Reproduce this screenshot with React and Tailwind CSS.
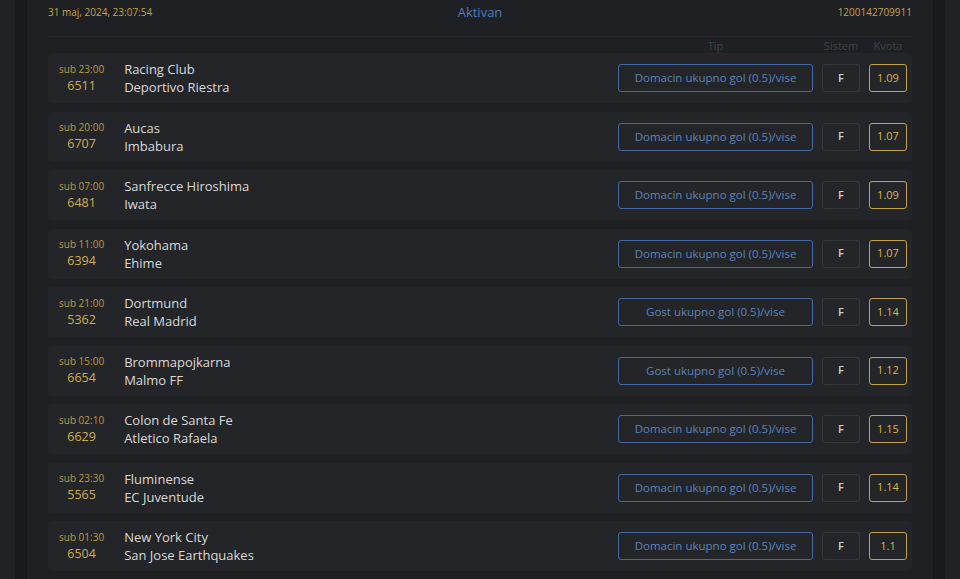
import React from "react";

const matches = [
  { time: "sub 23:00", code: "6511", home: "Racing Club", away: "Deportivo Riestra", tip: "Domacin ukupno gol (0.5)/vise", odd: "1.09" },
  { time: "sub 20:00", code: "6707", home: "Aucas", away: "Imbabura", tip: "Domacin ukupno gol (0.5)/vise", odd: "1.07" },
  { time: "sub 07:00", code: "6481", home: "Sanfrecce Hiroshima", away: "Iwata", tip: "Domacin ukupno gol (0.5)/vise", odd: "1.09" },
  { time: "sub 11:00", code: "6394", home: "Yokohama", away: "Ehime", tip: "Domacin ukupno gol (0.5)/vise", odd: "1.07" },
  { time: "sub 21:00", code: "5362", home: "Dortmund", away: "Real Madrid", tip: "Gost ukupno gol (0.5)/vise", odd: "1.14" },
  { time: "sub 15:00", code: "6654", home: "Brommapojkarna", away: "Malmo FF", tip: "Gost ukupno gol (0.5)/vise", odd: "1.12" },
  { time: "sub 02:10", code: "6629", home: "Colon de Santa Fe", away: "Atletico Rafaela", tip: "Domacin ukupno gol (0.5)/vise", odd: "1.15" },
  { time: "sub 23:30", code: "5565", home: "Fluminense", away: "EC Juventude", tip: "Domacin ukupno gol (0.5)/vise", odd: "1.14" },
  { time: "sub 01:30", code: "6504", home: "New York City", away: "San Jose Earthquakes", tip: "Domacin ukupno gol (0.5)/vise", odd: "1.1" },
];

const MatchRow = ({ m }) => (
  <div className="flex items-center h-[50px] rounded-[4px] bg-[#242528] pl-[11px] pr-[5px]">
    {/* time + code */}
    <div className="flex flex-col items-center">
      <span className="text-[10px] leading-[15px] text-[#b99a45]">{m.time}</span>
      <span className="text-[12.5px] leading-[18px] text-[#cfae52]">{m.code}</span>
    </div>

    <div className="flex flex-col ml-[20px] text-[13px] leading-[18px] text-[#d9d9d9]">
      <span>{m.home}</span>
      <span>{m.away}</span>
    </div>

    <div className="flex-1" />

    <div className="w-[195px] h-[28px] flex items-center justify-center rounded-[3px] border border-[#4569a0] text-[11.5px] text-[#5a84bf]">
      {m.tip}
    </div>
    <div className="w-[38px] h-[28px] ml-[9px] flex items-center justify-center rounded-[3px] border border-[#36373b] text-[11px] font-semibold text-[#cfcfcf]">
      F
    </div>
    <div className="w-[38px] h-[28px] ml-[9px] flex items-center justify-center rounded-[3px] border border-[#c2a244] text-[11px] font-medium text-[#d8b650]">
      {m.odd}
    </div>
  </div>
);

export default function App() {
  return (
    <div
      className="flex h-[579px] overflow-hidden bg-[#212226]"
      style={{ fontFamily: '"Open Sans", "DejaVu Sans", sans-serif' }}
    >
      <div className="w-[15px]" />
      <div className="w-[12px] bg-[#18191b]" />

      <div className="flex-1 flex flex-col bg-[#1f2023] px-[21px]">
        {/* header */}
        <div className="relative flex items-center justify-between h-[25px]">
          <span className="text-[10px] text-[#c2a24b]">31 maj, 2024, 23:07:54</span>
          <span className="absolute left-1/2 -translate-x-1/2 text-[13px] text-[#4c7cc2]">Aktivan</span>
          <span className="text-[10px] text-[#c2a24b]">1200142709911</span>
        </div>

        <div className="mt-[11px] h-px bg-[#27282b]" />

        {/* column labels */}
        <div className="flex items-center justify-end h-[16px] pt-[2px] pr-[5px] text-[11px] text-[#3e4045]">
          <span className="w-[195px] text-center">Tip</span>
          <span className="w-[38px] ml-[9px] text-center">Sistem</span>
          <span className="w-[38px] ml-[9px] text-center">Kvota</span>
        </div>

        <div className="flex flex-col gap-[8.5px]">
          {matches.map((m) => (
            <MatchRow key={m.code} m={m} />
          ))}
        </div>
      </div>

      <div className="w-[12px] bg-[#18191b]" />
      <div className="w-[15px]" />
    </div>
  );
}
